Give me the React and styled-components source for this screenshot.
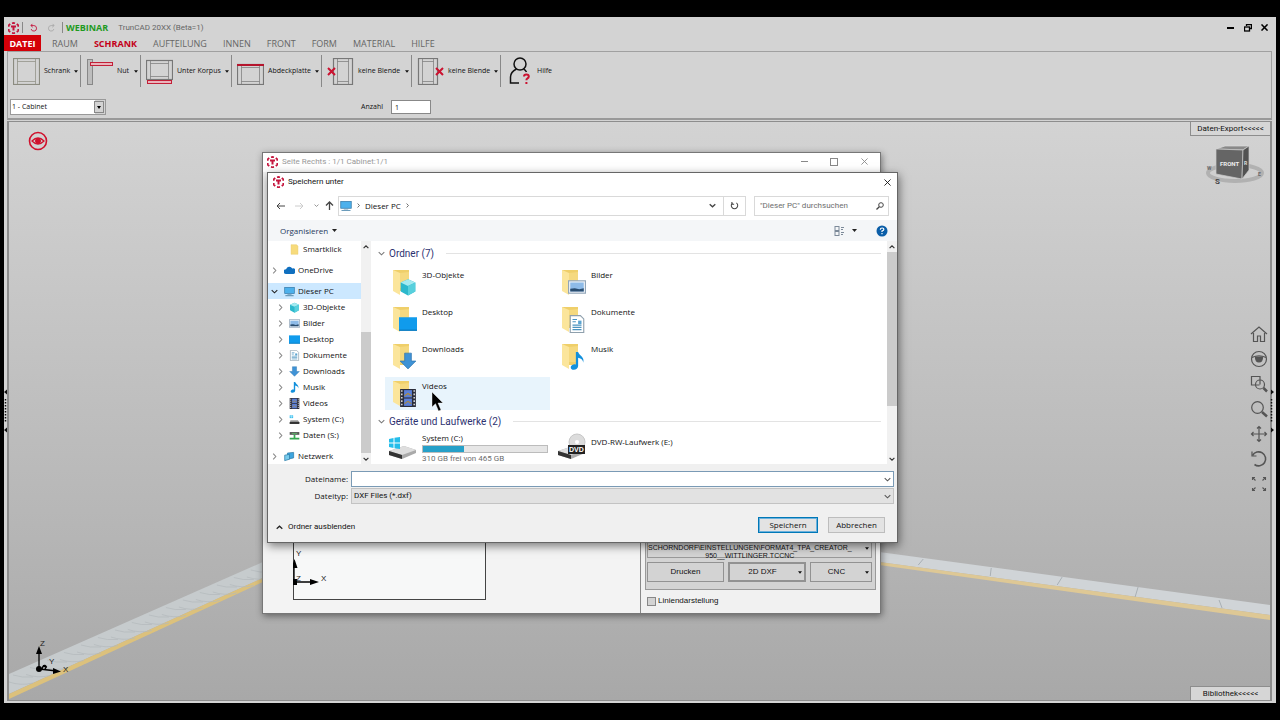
import React from "react";
import styled, { createGlobalStyle, css } from "styled-components";

const ui = '"Open Sans", "Noto Sans", sans-serif';
const narrow = 'Roboto, "Open Sans", sans-serif';
const classic = '"Liberation Sans", Arial, sans-serif';

const GlobalStyle = createGlobalStyle`
  *, *::before, *::after { box-sizing: border-box; }
  body { margin: 0; background: #000; color: #111; font-family: ${ui}; font-size: 8px; line-height: 12px; }
  button, input, select { font: inherit; color: inherit; margin: 0; padding: 0; border-radius: 0; }
  button { background: none; border: 0; white-space: nowrap; }
  select { appearance: none; }
  input { outline: none; min-width: 0; }
  svg { display: block; flex: none; }
`;

/* ---------- application frame ---------- */
const Page = styled.div`
  min-height: 100vh;
  display: flex;
  padding: 17px 4px;
`;
const Frame = styled.div`
  flex: 1;
  min-width: 0;
  display: flex;
  flex-direction: column;
  background: #d3d3d3;
`;
const TitleBar = styled.header`
  height: 18px;
  display: flex;
  align-items: center;
  gap: 3px;
  padding: 3px 4px 0;
`;
const Divider = styled.span`
  width: 1px;
  height: 11px;
  background: #888;
`;
const QuickButton = styled.button`
  width: 15px;
  height: 14px;
  display: grid;
  place-items: center;
`;
const Brand = styled.strong`
  color: #1f9a1f;
  font-size: 9px;
  font-weight: 700;
`;
const AppName = styled.span`
  color: #666;
  font-family: ${narrow};
  margin-left: 7px;
`;
const WindowButtons = styled.div`
  margin-left: auto;
  display: flex;
  gap: 2px;
`;
const FrameButton = styled.button`
  width: 15px;
  height: 14px;
  display: grid;
  place-items: center;
`;
const TabBar = styled.nav`
  height: 16px;
  display: flex;
  align-items: stretch;
`;
const Tab = styled.button`
  padding: 1px 8px 0;
  font-size: 9px;
  line-height: 14px;
  color: ${(p) => (p.$active ? "#c4001a" : "#666")};
  font-weight: ${(p) => (p.$active ? 700 : 400)};
  ${(p) => p.$file && css`
    background: #d40008;
    color: #fff;
    font-weight: 700;
    padding: 1px 4px 0;
    width: 37px;
    margin-right: 3px;
  `}
`;
const Ribbon = styled.section`
  margin: 0 4px 1px 3px;
  padding: 3px 0;
  border: 1px solid #a0a0a0;
  border-bottom: 2px solid #999;
  display: flex;
  flex-direction: column;
  gap: 12px;
`;
const Tools = styled.div`
  display: flex;
  height: 32px;
`;
const Tool = styled.button`
  width: ${(p) => p.$w}px;
  display: flex;
  align-items: center;
  gap: 4px;
  padding: 0 2px 0 5px;
  border-right: ${(p) => (p.$last ? 0 : 1)}px solid #888;
  font-size: 7px;
  & > span { flex: 1; text-align: left; }
`;
const Fields = styled.div`
  display: flex;
  align-items: center;
  height: 16px;
  padding-left: 2px;
`;
const CabinetPicker = styled.label`
  display: flex;
  width: 96px;
  height: 16px;
  border: 1px solid #999;
  background: #d3d3d3;
  position: relative;
  select {
    flex: 1;
    border: 0;
    background: linear-gradient(90deg, #fff 84px, #d3d3d3 84px);
    font-size: 7px;
    padding: 0 2px 0 1px;
  }
  svg { position: absolute; right: 1px; top: 1px; pointer-events: none; }
`;
const CountField = styled.label`
  display: flex;
  align-items: center;
  gap: 8px;
  margin-left: 255px;
  font-size: 7px;
  input {
    width: 40px;
    height: 14px;
    border: 1px solid #888;
    background: #fff;
    padding: 0 3px;
  }
`;

/* ---------- 3D viewport ---------- */
const Workspace = styled.div`
  flex: 1;
  display: flex;
  position: relative;
  padding: 0 4px 2px 3px;
`;
const Viewport = styled.main`
  flex: 1;
  min-height: 578px;
  position: relative;
  overflow: hidden;
  border: solid #8d8d8d;
  border-width: 1px 2px;
  background: linear-gradient(#d3d3d3, #b5b5b5 72%, #a8a8a8);
`;
const Scene = styled.svg`
  position: absolute;
  inset: 0;
  width: 100%;
  height: 100%;
`;
const Overlay = styled.div`
  position: absolute;
  ${(p) => p.$at}
`;
const FlyoutTab = styled.button`
  position: absolute;
  right: 0;
  ${(p) => p.$side}: 0;
  width: 80px;
  height: 14px;
  font-family: ${narrow};
  line-height: 12px;
  background: #d6d6d6;
  border: solid #8d8d8d;
  border-width: ${(p) => (p.$side === "top" ? "0 0 1px 1px" : "1px 0 0 1px")};
`;
const ViewTools = styled.div`
  position: absolute;
  right: 2px;
  top: 203px;
  display: flex;
  flex-direction: column;
  gap: 7px;
  color: #555;
  button { width: 18px; height: 18px; display: grid; place-items: center; }
`;

/* ---------- part window ---------- */
const PartWindow = styled.section`
  position: absolute;
  left: 253px;
  top: 30px;
  width: 619px;
  display: flex;
  flex-direction: column;
  background: #f1f1f1;
  border: 1px solid #777;
  box-shadow: 1px 2px 7px rgba(0, 0, 0, 0.45);
`;
const PartTitle = styled.div`
  height: 19px;
  display: flex;
  align-items: center;
  gap: 4px;
  padding: 0 1px 2px 4px;
  background: #fff;
  color: #999;
  font-family: ${narrow};
`;
const PartControls = styled.div`
  margin-left: auto;
  display: flex;
  button { width: 30px; height: 17px; display: grid; place-items: center; }
`;
const PartBody = styled.div`
  display: grid;
  grid-template-columns: 1fr 240px;
  height: 441px;
`;
const Sheet = styled.div`
  background: #f3f3f3;
  display: flex;
  align-items: flex-end;
  padding: 0 0 13px 30px;
`;
const OutputPanel = styled.aside`
  border-left: 1px solid #888;
  display: flex;
  flex-direction: column;
  justify-content: flex-end;
  gap: 6px;
  padding: 0 4px 7px;
  font-family: ${classic};
`;
const OutputGroup = styled.div`
  flex: 1;
  margin-top: 4px;
  border: 1px solid #999;
  background: #d3d3d3;
  display: flex;
  flex-direction: column;
  justify-content: flex-end;
  gap: 4px;
  padding: 0 3px 7px 1px;
`;
const PathButton = styled.button`
  height: 20px;
  border: 1px solid #999;
  display: flex;
  align-items: flex-start;
  justify-content: space-between;
  padding: 5px 2px 0 0;
  font-size: 7px;
  line-height: 8px;
  svg { margin-top: 3px; }
`;
const OutputButtons = styled.div`
  display: grid;
  grid-template-columns: 77px 78px 1fr;
  gap: 4px;
`;
const OutputButton = styled.button`
  height: 20px;
  border: ${(p) => (p.$strong ? 2 : 1)}px solid #929292;
  display: flex;
  align-items: center;
  gap: 5px;
  padding: 0 2px;
  span { flex: 1; }
`;
const LineCheck = styled.label`
  display: flex;
  align-items: center;
  gap: 2px;
  padding-left: 2px;
  height: 10px;
  input { appearance: none; width: 9px; height: 9px; border: 1px solid #888; background: #d3d3d3; }
`;

/* ---------- save dialog ---------- */
const Dialog = styled.section`
  position: absolute;
  left: 258px;
  top: 50px;
  width: 631px;
  display: flex;
  flex-direction: column;
  background: #fff;
  border: 1px solid #666;
  box-shadow: 1px 3px 9px rgba(0, 0, 0, 0.5);
`;
const DialogTitle = styled.div`
  height: 18px;
  display: flex;
  align-items: center;
  gap: 4px;
  padding: 0 5px;
  font-family: ${narrow};
  button { margin-left: auto; width: 10px; height: 10px; display: grid; place-items: center; }
`;
const NavRow = styled.div`
  display: flex;
  align-items: center;
  height: 29px;
  padding: 0 8px 0 5px;
`;
const NavButton = styled.button`
  width: ${(p) => p.$w}px;
  height: 18px;
  display: grid;
  place-items: center;
`;
const AddressBar = styled.div`
  flex: 1;
  height: 20px;
  display: flex;
  align-items: center;
  gap: 4px;
  border: 1px solid #d9d9d9;
  padding-left: 1px;
  margin-right: 8px;
`;
const AddressButton = styled.button`
  width: 22px;
  height: 18px;
  display: grid;
  place-items: center;
  border-left: ${(p) => (p.$ruled ? 1 : 0)}px solid #d9d9d9;
  margin-left: ${(p) => (p.$ruled ? "-4px" : "auto")};
`;
const SearchBox = styled.label`
  width: 135px;
  height: 20px;
  display: flex;
  align-items: center;
  border: 1px solid #d9d9d9;
  padding: 0 4px 0 5px;
  font-family: ${narrow};
  input { flex: 1; border: 0; background: none; }
  input::placeholder { color: #6d6d6d; opacity: 1; }
`;
const CommandBar = styled.div`
  height: 21px;
  display: flex;
  align-items: center;
  justify-content: space-between;
  background: #f4f6f8;
  padding: 0 9px 0 12px;
  color: #1e395b;
`;
const CommandButton = styled.button`
  display: flex;
  align-items: center;
  gap: 4px;
`;
const CommandGroup = styled.div`
  display: flex;
  align-items: center;
  gap: 19px;
`;
const Explorer = styled.div`
  display: grid;
  grid-template-columns: 93px 10px 1fr 10px;
  height: 223px;
`;
const Tree = styled.nav`
  overflow: hidden;
  display: flex;
  flex-direction: column;
  gap: 5px;
`;
const TreeRow = styled.button`
  width: 100%;
  height: 16px;
  display: flex;
  align-items: center;
  gap: 3px;
  padding-left: ${(p) => (p.$deep ? 9 : 3)}px;
  background: ${(p) => (p.$selected ? "#cce8ff" : "transparent")};
  & > svg:first-child { margin-right: ${(p) => (p.$deep ? 2 : 3)}px; }
`;
const ScrollTrack = styled.div`
  background: #f1f1f1;
  display: flex;
  flex-direction: column;
  align-items: center;
  justify-content: space-between;
`;
const ScrollThumb = styled.div`
  width: 100%;
  height: ${(p) => p.$h}px;
  background: #cbcbcb;
  margin-top: ${(p) => (p.$end ? "auto" : 0)};
  margin-bottom: ${(p) => (p.$end ? 0 : "auto")};
`;
const ScrollButton = styled.button`
  width: 10px;
  height: 11px;
  display: grid;
  place-items: center;
`;
const Files = styled.div`
  overflow: hidden;
  padding: 4px 6px 0 7px;
`;
const GroupHeading = styled.h2`
  margin: 0;
  height: 17px;
  display: flex;
  align-items: center;
  gap: 4px;
  font-family: ${narrow};
  font-size: 10px;
  font-weight: 400;
  color: #2d3170;
  &::after { content: ""; flex: 1; height: 1px; background: #e3e3e3; margin-left: 8px; }
`;
const Tiles = styled.div`
  display: grid;
  grid-template-columns: 165px 165px;
  gap: 4px;
  padding: ${(p) => (p.$drives ? "1px 0 0 7px" : "4px 0 3px 7px")};
`;
const Tile = styled.button`
  height: ${(p) => (p.$drive ? 34 : 33)}px;
  display: flex;
  align-items: flex-start;
  gap: 5px;
  padding: ${(p) => (p.$drive ? "1px 2px 0 2px" : "3px 2px 0 7px")};
  text-align: left;
  background: ${(p) => (p.$hover ? "#e8f4fc" : "transparent")};
  & > span { display: flex; flex-direction: column; flex: 1; padding-top: ${(p) => (p.$centered ? 4 : 0)}px; }
`;
const Usage = styled.i`
  height: 8px;
  margin-top: 1px;
  border: 1px solid #bcbcbc;
  background: linear-gradient(90deg, #26a0c8 ${(p) => p.$used}%, #e6e6e6 ${(p) => p.$used}%);
`;
const Note = styled.small`
  font-family: ${narrow};
  font-size: 8px;
  color: #6d6d6d;
`;
const DialogFooter = styled.div`
  background: #f0f0f0;
  padding: 7px 3px 9px 0;
  display: flex;
  flex-direction: column;
`;
const FormRow = styled.label`
  display: grid;
  grid-template-columns: 80px 1fr;
  column-gap: 3px;
  align-items: center;
  margin-bottom: 1px;
  text-align: right;
`;
const NameField = styled.span`
  height: 16px;
  display: flex;
  align-items: center;
  border: 1px solid ${(p) => (p.$grey ? "#c3c3c3" : "#7a9ab5")};
  background: ${(p) => (p.$grey ? "#e2e2e2" : "#fff")};
  padding: 0 2px;
  font-family: ${narrow};
  input, select { flex: 1; border: 0; background: none; height: 14px; }
`;
const Actions = styled.div`
  display: flex;
  align-items: center;
  gap: 10px;
  padding: 12px 9px 0 8px;
`;
const FolderToggle = styled.button`
  display: flex;
  align-items: center;
  gap: 5px;
  margin-right: auto;
  padding-top: 4px;
  font-family: ${narrow};
`;
const ActionButton = styled.button`
  width: ${(p) => (p.$primary ? 60 : 57)}px;
  height: 16px;
  background: #e3e3e3;
  border: 1px solid #bdbdbd;
  line-height: 12px;
  ${(p) => p.$primary && css`border: 1px solid #0078b7; box-shadow: inset 0 0 0 1px #6cb1dc;`}
`;

/* ---------- drawings ---------- */
const Logo = () => (
  <svg width="11" height="12" viewBox="0 0 22 24" fill="none" stroke="#c4143c" strokeWidth="3.4">
    <path d="M8 2.5 11 1.8l3 .7M17.500 4l3 2.500v3M20.500 14v3.500l-3 2.500M14 21.800l-3 .7-3-.7M4.500 20l-3-2.500V14M1.500 9.500v-3l3-2.500" />
    <path d="M6 9h10M11 9v8" strokeWidth="4" />
  </svg>
);
const Caret = ({ size = 5, color = "#111" }) => (
  <svg width={size} height="3" viewBox="0 0 10 6"><path d="M0 0h10L5 6z" fill={color} /></svg>
);
const Chevron = ({ dir = "right", color = "#777", size = 7, w = 1.2 }) => {
  const d = { right: "M2.500 0.800 5.500 4 2.500 7.200", down: "M0.800 2.500 4 5.500 7.200 2.500", up: "M0.800 5.500 4 2.500 7.200 5.500" }[dir];
  return <svg width={size} height={size} viewBox="0 0 8 8"><path d={d} fill="none" stroke={color} strokeWidth={w} /></svg>;
};
const Cross = ({ size = 8, color = "#111", w = 1 }) => (
  <svg width={size} height={size} viewBox="0 0 8 8"><path d="M.5.5l7 7M7.500.5l-7 7" stroke={color} strokeWidth={w} /></svg>
);
const Undo = ({ flip, color }) => (
  <svg width="9" height="9" viewBox="0 0 12 12" fill="none" stroke={color} strokeWidth="1.200">
    <g transform={flip ? "matrix(-1 0 0 1 12 0)" : undefined}><path d="M4.500 1.200 2.500 3.400l2.500 2.200M2.600 3.400H6.500a3.700 3.700 0 1 1-3.700 4.600" /></g>
  </svg>
);
const Refresh = () => (
  <svg width="9" height="9" viewBox="0 0 12 12" fill="none" stroke="#444" strokeWidth="1.400">
    <path d="M8.500 2.500a4.300 4.300 0 1 1-5 0M2.500 1.200v3h3" />
  </svg>
);

const Carcass = ({ x = 0, y = 0, w = 26, h = 26, color = "#8b8b80" }) => (
  <g fill="none" stroke={color}>
    <rect x={x + 0.5} y={y + 0.5} width={w - 1} height={h - 1} strokeWidth="1.200" />
    <path d={`M${x + 4.5} ${y + 1}V${y + h - 1}M${x + w - 4.5} ${y + 1}V${y + h - 1}M${x + 4.5} ${y + 3.5}H${x + w - 4.5}M${x + 4.5} ${y + h - 3.5}H${x + w - 4.5}`} strokeWidth=".7" />
  </g>
);
const toolIcons = {
  cabinet: <svg width="27" height="27" viewBox="0 0 27 27"><Carcass w={27} h={27} /></svg>,
  groove: (
    <svg width="27" height="27" viewBox="0 0 27 27">
      <rect x="1.500" y="1.500" width="5" height="25" fill="#bdbdbd" stroke="#888" />
      <rect x="4.500" y="4.500" width="22" height="3" fill="#eab4bb" stroke="#c22038" />
    </svg>
  ),
  base: (
    <svg width="27" height="27" viewBox="0 0 27 27">
      <Carcass y={2} w={27} h={20} color="#777" />
      <rect x="1.500" y="22.500" width="24" height="3" fill="#eab4bb" stroke="#c22038" />
    </svg>
  ),
  top: (
    <svg width="27" height="27" viewBox="0 0 27 27">
      <Carcass y={6} w={27} h={21} color="#777" />
      <rect x="0" y="6" width="27" height="2" fill="#b5152d" />
    </svg>
  ),
  blendLeft: (
    <svg width="27" height="27" viewBox="0 0 27 27">
      <Carcass x={6} w={20} h={27} color="#777" />
      <path d="M1 10l7 7M8 10l-7 7" stroke="#cb1230" strokeWidth="2" />
    </svg>
  ),
  blendRight: (
    <svg width="27" height="27" viewBox="0 0 27 27">
      <Carcass x={1} w={20} h={27} color="#777" />
      <path d="M19 10l7 7M26 10l-7 7" stroke="#cb1230" strokeWidth="2" />
    </svg>
  ),
  help: (
    <svg width="27" height="28" viewBox="0 0 27 28" fill="none">
      <circle cx="14" cy="7" r="6" stroke="#111" strokeWidth="1.500" />
      <path d="M10.500 12Q4.500 15 4.500 20v6H13M17.500 12q2 1 3 3" stroke="#111" strokeWidth="1.500" />
      <path d="M18 19.500q0-2 2.400-2t2.400 2q0 1.300-1.500 2-.9.600-.9 1.700M20.400 25v2" stroke="#cb1230" strokeWidth="2" />
    </svg>
  ),
};

const glyphs = {
  folder: <path d="M3 1h8l2 2v12H3z" fill="#f7db7c" stroke="#e6c35c" strokeWidth=".6" />,
  cloud: <path d="M3 13a3.500 3.500 0 0 1 0-7 5 5 0 0 1 9-1 4 4 0 0 1 2 8z" fill="#0f6fbf" />,
  pc: <><rect x="1" y="2" width="14" height="9" fill="#4db1ec" stroke="#3278a8" /><path d="M2 14h12M5 12h6" stroke="#6b9cbb" strokeWidth="1.500" /></>,
  cube: <><path d="M8 1l6.500 3v8L8 15.500 1.500 12V4z" fill="#2cb8cc" /><path d="M8 1l6.500 3L8 7 1.500 4z" fill="#a5eaf0" /><path d="M8 7v8.500L14.500 12V4z" fill="#58d0dd" /></>,
  picture: <><rect x=".5" y="2.500" width="15" height="11" fill="#f2f6fa" stroke="#91a5b8" /><rect x="2" y="4" width="12" height="8" fill="#8ebbe8" /><path d="M2 12V9.500l4-.5 4 1 4-1v3z" fill="#2a4d70" /></>,
  screen: <><rect x="0" y="2" width="16" height="12" fill="#109bec" /><path d="M0 13.500h16" stroke="#0a76b8" /></>,
  document: <><path d="M2 .5h9l3 3v12H2z" fill="#fff" stroke="#8fa0ad" /><path d="M4 4h4M4 6h3M4 9h8M4 11h8M4 13h8" stroke="#4b93bf" /><rect x="9" y="5" width="3" height="3" fill="#5aa3d0" /></>,
  down: <path d="M5 1h6v7h4l-7 7-7-7h4z" fill="#3f93d6" stroke="#2a72ac" strokeWidth=".6" />,
  music: <path d="M7 0h2c1 3.500 6 4 4.500 9.500 0-2.500-1.500-4-4.500-4.500v7.500c0 2-2 3.300-3.800 3.300S2 14.500 2.500 13 5 10.500 7 11z" fill="#1290dc" />,
  film: <><rect x="1" y="0" width="14" height="16" fill="#2b2d3a" /><path d="M2.500 1v14M13.500 1v14" stroke="#eee" strokeDasharray="1.500 1.500" strokeWidth="1.200" /><rect x="4.500" y="1" width="7" height="6.500" fill="#5b80d8" /><rect x="4.500" y="8.500" width="7" height="6.500" fill="#5b80d8" /><path d="M5 6l3-2 3 2M5 13l3-2 3 2" stroke="#ae8a36" fill="none" /></>,
  disk: <><path d="M1 2h5v4H1z" fill="#27b9ee" /><path d="M3.500 2v4M1 4h5" stroke="#fff" strokeWidth=".6" /><path d="M2 9h11l2 3v2H1z" fill="#9b9b9b" /><path d="M1 11.500h14v3H1z" fill="#333" /></>,
  netdisk: <><path d="M1 3h14v4H1z" fill="#555" /><path d="M4 5h8" stroke="#5fd36e" /><path d="M8 7v6M1 12.500h14" stroke="#35a850" strokeWidth="2.500" /></>,
  network: <><path d="M5 3l9-1v8l-9 2z" fill="#3ea5df" stroke="#2777a5" /><path d="M1 6l7-1v7l-7 2z" fill="#77cbec" stroke="#2777a5" /></>,
};
const Glyph = ({ name, size = 11 }) => <svg width={size} height={size} viewBox="0 0 16 16">{glyphs[name]}</svg>;

const FolderArt = ({ name }) => (
  <svg width="25" height="28" viewBox="0 0 25 28">
    <path d="M1 1h16v18l-3 3H1z" fill="#efcf6a" />
    <path d="M1 1l7 3v22l-7-4z" fill="#fbe59b" />
    <path d="M8 4l9-1v16H8z" fill="#f5d97f" />
    <svg x="7" y="9" width="18" height="18" viewBox="0 0 16 16">{glyphs[name]}</svg>
  </svg>
);
const DriveArt = ({ dvd }) => (
  <svg width="30" height="28" viewBox="0 0 30 28">
    <path d="M2 19l15-5 12 4v3l-14 6-13-4z" fill="#aaa" />
    <path d="M2 19l15-5 12 4-14 5z" fill="#dedede" />
    <path d="M2 19l13 4v4L2 23z" fill="#333" />
    {dvd ? (
      <>
        <circle cx="21" cy="10" r="8" fill="#dcdcdc" stroke="#c8c8c8" />
        <circle cx="21" cy="10" r="2" fill="#fff" />
        <rect x="12" y="13" width="17" height="9" fill="#222" />
        <text x="13" y="20" fontFamily="Liberation Sans, sans-serif" fontSize="7" fontWeight="700" fill="#fff">DVD</text>
      </>
    ) : (
      <path d="M2 7l4.500-1v4.500H2zM7.500 5.800 13 5v5.500H7.500zM2 11.500h4.500V16L2 15zM7.500 11.500H13V17l-5.500-.8z" fill="#25bdea" />
    )}
  </svg>
);

const Axes = ({ letters }) => (
  <svg width="38" height="40" viewBox="0 0 38 40">
    <path d="M6 31V12M6 31l18 2" stroke="#000" strokeWidth="1.300" />
    <path d="M6 8l3 8H3zM28 33.500l-8 2.500v-6z" fill="#000" />
    <circle cx="6" cy="31" r="3" />
    <path d="M9 31q1-4 3-3.500t0 3.500M10 28l4 1" fill="none" stroke="#000" strokeWidth="1.400" />
    {letters.map(([t, x, y]) => (
      <text key={t} x={x} y={y} fontFamily="Liberation Sans, sans-serif" fontSize="8" fill="#222">{t}</text>
    ))}
  </svg>
);

const RoomScene = () => (
  <Scene viewBox="0 0 1262 578" preserveAspectRatio="none" aria-hidden="true">
    <path d="M0 552L254 440v16L0 572z" fill="#c6cbcd" />
    <path d="M0 572L254 456v4L0 577z" fill="#dcc17c" />
    <g stroke="#b3b9bc" strokeWidth=".7" fill="none">
      {[...Array(15)].map((_, i) => (
        <path key={i} d={`M${i * 17} ${560 - i * 7.5}q12 4 24 1M${i * 17 + 4} ${553 - i * 7.5}q9 3 20 2`} />
      ))}
    </g>
    <path d="M871 430L1262 483v10L871 440z" fill="#d0d4d7" />
    <path d="M871 440L1262 493v5L871 443z" fill="#dec895" />
    <g stroke="#a9b0b4" fill="none">
      <path d="M915 437l-5 6M983 446l-1 8M1054 455l-5 8M1130 465l-3 10M1211 478l3 8" />
    </g>
  </Scene>
);
const ViewCube = () => (
  <svg width="62" height="40" viewBox="0 0 62 40">
    <ellipse cx="31" cy="28" rx="27" ry="8" fill="none" stroke="#b1b1b1" strokeWidth="4" />
    <path d="M12 4l9-3h24l-6 4z" fill="#898989" stroke="#ddd" strokeWidth=".7" />
    <path d="M12 4l27 1-1 29-26-5z" fill="#656565" stroke="#ccc" strokeWidth=".7" />
    <path d="M39 5l6-4v24l-7 9z" fill="#525252" stroke="#ccc" strokeWidth=".7" />
    <g fontFamily="Roboto, sans-serif" fontWeight="700">
      <text x="16" y="21" fontSize="6" fill="#eee">FRONT</text>
      <text x="40" y="20" fontSize="5" fill="#ddd">R</text>
      <text x="11" y="39" fontSize="8" fill="#444">S</text>
      <text x="54" y="31" fontSize="5" fill="#666">E</text>
      <text x="3" y="25" fontSize="5" fill="#666">W</text>
    </g>
  </svg>
);
const RedEye = () => (
  <svg width="20" height="20" viewBox="0 0 20 20" fill="none" stroke="#d0102c">
    <circle cx="10" cy="10" r="8.500" strokeWidth="1.600" />
    <path d="M4 10q6-6 12 0-6 6-12 0z" strokeWidth="1.300" />
    <circle cx="10" cy="10" r="2.500" fill="#d0102c" />
  </svg>
);
const Pointer = () => (
  <svg width="12" height="20" viewBox="0 0 12 20"><path d="M1 0v15l3.500-3.300L7.500 19l2.500-1-3-7h5z" fill="#000" stroke="#fff" strokeWidth=".4" /></svg>
);
const Grip = ({ mirrored }) => (
  <svg width="4" height="44" viewBox="0 0 4 44">
    <path d={mirrored ? "M1 .500l3 2.500-3 2.500zM1 38.500l3 2.500-3 2.500z" : "M0 3l3-2.500v5zM0 41l3-2.500v5z"} fill="#111" />
    <path d="M1.500 10v24" stroke="#111" strokeWidth="1.500" strokeDasharray="1.500 1.500" />
  </svg>
);

const viewIcons = [
  ["Startansicht", <path d="M1 9l8-7 8 7M3.500 8v8.500h4V11h3v5.500h4V8" />],
  ["Sichtbarkeit", <><circle cx="9" cy="9" r="7.500" /><path d="M2 7.500q7-3.500 14 0" /><path d="M5.500 7h7q0 5-3.500 5T5.500 7z" fill="#555" /></>],
  ["Bereich zoomen", <><path d="M9.500 10H1.500V1.500H10V9.500" /><circle cx="10" cy="9.500" r="4.500" /><path d="M13.500 13l3.500 3.500" strokeWidth="2.500" /></>],
  ["Zoom", <><circle cx="7.500" cy="7.500" r="5.800" /><path d="M12 12l5 4.500" strokeWidth="2.500" /></>],
  ["Verschieben", <path d="M9 1.500v15M1.500 9h15M7 3.500l2-2 2 2M7 14.500l2 2 2-2M3.500 7l-2 2 2 2M14.500 7l2 2-2 2" />],
  ["Drehen", <><path d="M2.500 5.500A7 7 0 1 1 4.500 14.500" strokeWidth="1.600" /><path d="M2 1.500v4.500h4.500" /></>],
  ["Einpassen", <path d="M5.500 5.500 2.500 2.500M2.500 5v-2.500H5M12.500 5.500l3-3M13 2.500h2.500V5M5.500 12.500l-3 3M2.500 13v2.500H5M12.500 12.500l3 3M15.500 13v2.500H13" strokeWidth="1.100" />],
];

/* ---------- data ---------- */
const tabs = ["RAUM", "SCHRANK", "AUFTEILUNG", "INNEN", "FRONT", "FORM", "MATERIAL", "HILFE"];
const tools = [
  ["cabinet", "Schrank", 73], ["groove", "Nut", 60], ["base", "Unter Korpus", 91], ["top", "Abdeckplatte", 90],
  ["blendLeft", "keine Blende", 90], ["blendRight", "keine Blende", 89], ["help", "Hilfe", 60],
];
const pcChildren = [
  ["cube", "3D-Objekte"], ["picture", "Bilder"], ["screen", "Desktop"], ["document", "Dokumente"], ["down", "Downloads"],
  ["music", "Musik"], ["film", "Videos"], ["disk", "System (C:)"], ["netdisk", "Daten (S:)"],
];
const folders = [
  ["cube", "3D-Objekte"], ["picture", "Bilder"], ["screen", "Desktop"], ["document", "Dokumente"],
  ["down", "Downloads"], ["music", "Musik"], ["film", "Videos"],
];

const TreeItem = ({ icon, label, deep, selected, leaf }) => (
  <TreeRow $deep={deep} $selected={selected}>
    <Chevron dir={selected ? "down" : "right"} color={leaf ? "transparent" : selected ? "#222" : "#888"} />
    <Glyph name={icon} />
    {label}
  </TreeRow>
);
const Scrollbar = ({ thumb, end }) => (
  <ScrollTrack>
    <ScrollButton aria-label="Nach oben"><Chevron dir="up" color="#333" size={6} w={1.6} /></ScrollButton>
    <ScrollThumb $h={thumb} $end={end} />
    <ScrollButton aria-label="Nach unten"><Chevron dir="down" color="#333" size={6} w={1.6} /></ScrollButton>
  </ScrollTrack>
);

const SaveDialog = () => (
  <Dialog role="dialog" aria-label="Speichern unter">
    <DialogTitle>
      <Logo />Speichern unter
      <button aria-label="Schließen"><Cross size={7} /></button>
    </DialogTitle>
    <NavRow>
      <NavButton $w={14} aria-label="Zurück"><svg width="9" height="8" viewBox="0 0 9 8"><path d="M9 4H1M4 1 1 4l3 3" fill="none" stroke="#444" /></svg></NavButton>
      <NavButton $w={24} aria-label="Vorwärts"><svg width="9" height="8" viewBox="0 0 9 8"><path d="M0 4h8M5 1l3 3-3 3" fill="none" stroke="#ccc" /></svg></NavButton>
      <NavButton $w={10} aria-label="Verlauf"><Chevron dir="down" size={5} /></NavButton>
      <NavButton $w={17} aria-label="Aufwärts"><svg width="9" height="9" viewBox="0 0 9 9"><path d="M4.500 9V1M1 4.500l3.500-3.500L8 4.500" fill="none" stroke="#444" strokeWidth="1.300" /></svg></NavButton>
      <AddressBar>
        <Glyph name="pc" size={12} />
        <Chevron color="#444" size={5} />
        <span>Dieser PC</span>
        <Chevron color="#444" size={5} />
        <AddressButton aria-label="Verlauf anzeigen"><Chevron dir="down" color="#444" w={1.5} /></AddressButton>
        <AddressButton $ruled aria-label="Aktualisieren"><Refresh /></AddressButton>
      </AddressBar>
      <SearchBox>
        <input aria-label="Suche" placeholder={'"Dieser PC" durchsuchen'} />
        <svg width="8" height="8" viewBox="0 0 8 8" fill="none" stroke="#444"><circle cx="5" cy="3" r="2.300" /><path d="M3.300 4.700.5 7.500" strokeWidth="1.300" /></svg>
      </SearchBox>
    </NavRow>
    <CommandBar>
      <CommandButton>Organisieren <Caret color="#222" /></CommandButton>
      <CommandGroup>
        <CommandButton aria-label="Ansicht ändern">
          <svg width="14" height="10" viewBox="0 0 14 10" fill="none" stroke="#7c8a99"><rect x="1" y=".5" width="4" height="4" /><rect x="1" y="5.500" width="4" height="4" /><path d="M7 1.500h3M7 3.500h2M7 6.500h3M7 8.500h2" /></svg>
          <Caret color="#222" />
        </CommandButton>
        <CommandButton aria-label="Hilfe">
          <svg width="12" height="12" viewBox="0 0 12 12"><circle cx="6" cy="6" r="5.500" fill="#0b5ea8" /><path d="M4.300 4.700q0-1.700 1.800-1.700t1.700 1.500Q7.800 5.400 6 6v1M6 8v1.200" stroke="#fff" strokeWidth="1.200" fill="none" /></svg>
        </CommandButton>
      </CommandGroup>
    </CommandBar>
    <Explorer>
      <Tree aria-label="Ordnerstruktur">
        <div><TreeItem icon="folder" label="Smartklick" deep leaf /></div>
        <div><TreeItem icon="cloud" label="OneDrive" /></div>
        <div>
          <TreeItem icon="pc" label="Dieser PC" selected />
          {pcChildren.map(([icon, label]) => <TreeItem key={label} icon={icon} label={label} deep />)}
        </div>
        <div><TreeItem icon="network" label="Netzwerk" /></div>
      </Tree>
      <Scrollbar thumb={121} end />
      <Files>
        <GroupHeading><Chevron dir="down" />Ordner (7)</GroupHeading>
        <Tiles>
          {folders.map(([icon, label]) => (
            <Tile key={label} $hover={label === "Videos"}><FolderArt name={icon} /><span>{label}</span></Tile>
          ))}
        </Tiles>
        <GroupHeading><Chevron dir="down" />Geräte und Laufwerke (2)</GroupHeading>
        <Tiles $drives>
          <Tile $drive><DriveArt /><span>System (C:)<Usage $used={33} /><Note>310 GB frei von 465 GB</Note></span></Tile>
          <Tile $drive $centered><DriveArt dvd /><span>DVD-RW-Laufwerk (E:)</span></Tile>
        </Tiles>
      </Files>
      <Scrollbar thumb={154} />
    </Explorer>
    <DialogFooter>
      <FormRow>
        Dateiname:
        <NameField><input /><Chevron dir="down" color="#555" /></NameField>
      </FormRow>
      <FormRow>
        Dateityp:
        <NameField $grey><select><option>DXF Files (*.dxf)</option></select><Chevron dir="down" color="#555" /></NameField>
      </FormRow>
      <Actions>
        <FolderToggle><Chevron dir="up" color="#222" w={1.4} /> Ordner ausblenden</FolderToggle>
        <ActionButton $primary>Speichern</ActionButton>
        <ActionButton>Abbrechen</ActionButton>
      </Actions>
    </DialogFooter>
  </Dialog>
);

const PartDetails = () => (
  <PartWindow aria-label="Seite Rechts">
    <PartTitle>
      <Logo />Seite Rechts : 1/1 Cabinet:1/1
      <PartControls>
        <button aria-label="Minimieren"><svg width="7" height="1"><path d="M0 .5h7" stroke="#888" /></svg></button>
        <button aria-label="Maximieren"><svg width="8" height="8"><rect x=".5" y=".5" width="7" height="7" fill="none" stroke="#888" /></svg></button>
        <button aria-label="Schließen"><Cross size={7} color="#888" /></button>
      </PartControls>
    </PartTitle>
    <PartBody>
      <Sheet>
        <svg width="193" height="400" viewBox="0 0 193 400">
          <rect x=".5" y=".5" width="192" height="399" fill="#f7f8f8" stroke="#444" />
          <path d="M1 382V363M1 382h18" stroke="#000" strokeWidth="1.300" />
          <path d="M1.500 359l3 9h-6zM26 382l-9 3v-6zM0 379h4v6H0z" />
          <g fontFamily="Liberation Sans, sans-serif" fontSize="8" fill="#222">
            <text x="3" y="356">Y</text><text x="3" y="381">Z</text><text x="28" y="381">X</text>
          </g>
        </svg>
      </Sheet>
      <OutputPanel>
        <OutputGroup>
          <PathButton><span>SCHORNDORF\EINSTELLUNGEN\FORMAT4_TPA_CREATOR_<br />950__WITTLINGER.TCCNC</span><Caret size={4} /></PathButton>
          <OutputButtons>
            <OutputButton><span>Drucken</span></OutputButton>
            <OutputButton $strong><span>2D DXF</span><Caret size={4} /></OutputButton>
            <OutputButton><span>CNC</span><Caret size={4} /></OutputButton>
          </OutputButtons>
        </OutputGroup>
        <LineCheck><input type="checkbox" />Liniendarstellung</LineCheck>
      </OutputPanel>
    </PartBody>
  </PartWindow>
);

export default function App() {
  return (
    <Page>
      <GlobalStyle />
      <Frame>
        <TitleBar>
          <Logo />
          <Divider />
          <QuickButton aria-label="Rückgängig"><Undo color="#c4143c" /></QuickButton>
          <QuickButton aria-label="Wiederholen"><Undo flip color="#aaa" /></QuickButton>
          <Divider />
          <Brand>WEBINAR</Brand>
          <AppName>TrunCAD 20XX (Beta=1)</AppName>
          <WindowButtons>
            <FrameButton aria-label="Minimieren"><svg width="7" height="2"><path d="M0 1h7" stroke="#000" strokeWidth="2" /></svg></FrameButton>
            <FrameButton aria-label="Wiederherstellen"><svg width="8" height="8" fill="none" stroke="#000"><path d="M2.500 2V.5h5v4H6" strokeWidth="1.300" /><rect x=".5" y="3" width="5" height="4" strokeWidth="1.300" /></svg></FrameButton>
            <FrameButton aria-label="Schließen"><Cross size={7} color="#000" w={1.8} /></FrameButton>
          </WindowButtons>
        </TitleBar>
        <TabBar>
          <Tab $file>DATEI</Tab>
          {tabs.map((t) => <Tab key={t} $active={t === "SCHRANK"}>{t}</Tab>)}
        </TabBar>
        <Ribbon>
          <Tools>
            {tools.map(([icon, label, w]) => (
              <Tool key={icon} $w={w} $last={icon === "help"}>
                {toolIcons[icon]}<span>{label}</span>{icon !== "help" && <Caret size={4} />}
              </Tool>
            ))}
          </Tools>
          <Fields>
            <CabinetPicker>
              <select aria-label="Schrank"><option>1 - Cabinet</option></select>
              <svg width="10" height="12" viewBox="0 0 10 12"><rect x=".5" y=".5" width="9" height="11" fill="#d3d3d3" stroke="#888" /><path d="M3 5h4L5 8z" /></svg>
            </CabinetPicker>
            <CountField>Anzahl <input defaultValue="1" /></CountField>
          </Fields>
        </Ribbon>
        <Workspace>
          <Viewport>
            <RoomScene />
            <Overlay $at="left: 19px; top: 9px;"><RedEye /></Overlay>
            <Overlay $at="left: 24px; top: 516px;"><Axes letters={[["Z", 7, 8], ["Y", 16, 26], ["X", 30, 34]]} /></Overlay>
            <Overlay $at="right: 4px; top: 23px;"><ViewCube /></Overlay>
            <FlyoutTab $side="top">Daten-Export&lt;&lt;&lt;&lt;&lt;</FlyoutTab>
            <FlyoutTab $side="bottom">Bibliothek&lt;&lt;&lt;&lt;&lt;</FlyoutTab>
            <ViewTools>
              {viewIcons.map(([label, drawing]) => (
                <button key={label} aria-label={label}>
                  <svg width="18" height="18" viewBox="0 0 18 18" fill="none" stroke="#555" strokeWidth="1.200">{drawing}</svg>
                </button>
              ))}
            </ViewTools>
            <PartDetails />
            <SaveDialog />
            <Overlay $at="left: 422px; top: 270px;"><Pointer /></Overlay>
          </Viewport>
          <Overlay $at="left: 0; top: 268px;"><Grip /></Overlay>
          <Overlay $at="right: 2px; top: 268px;"><Grip mirrored /></Overlay>
        </Workspace>
      </Frame>
    </Page>
  );
}
